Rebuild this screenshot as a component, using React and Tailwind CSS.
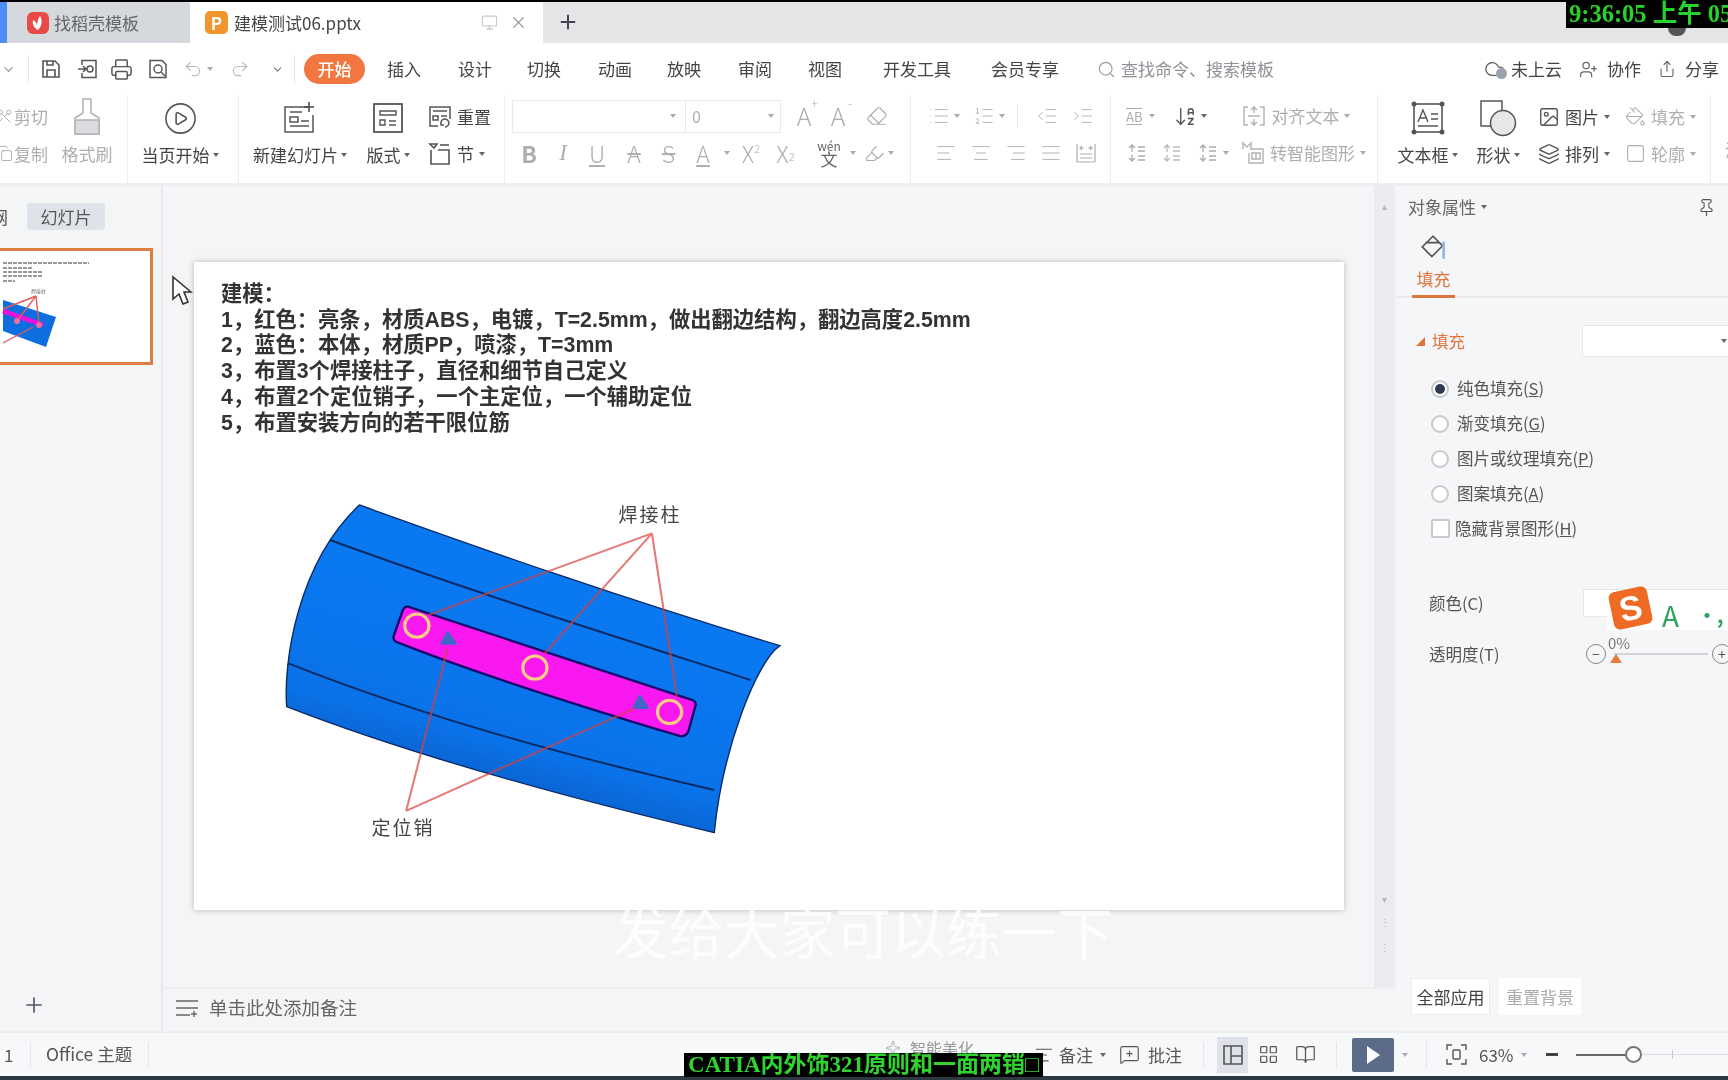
import React from "react";
import { X, Plus, Monitor, Undo2, Redo2, Search, Printer, ChevronDown, CirclePlay, Scissors, Copy, Pin, Image as ImageIcon, Layers, Square, AlignLeft, AlignCenter, AlignRight, AlignJustify, IndentDecrease, IndentIncrease, List, ListOrdered, Cloud, UserPlus, Share, Eraser, Highlighter, PaintBucket, LayoutGrid, BookOpen, MessageSquarePlus, ArrowDownAZ, Sparkle } from "lucide-react";

const Caret = ({ c = "border-t-[#666]" }) => (
  <span className={`inline-block shrink-0 w-0 h-0 border-x-[3px] border-x-transparent border-t-[4px] ${c}`} />
);
const GCaret = () => <Caret c="border-t-[#a8aaad]" />;

function FileDisk() {
  return (
    <svg width="22" height="22" viewBox="0 0 22 22" fill="none" stroke="#555" strokeWidth="1.6">
      <path d="M3 3h12l4 4v12H3z" /><path d="M7 19v-7h8v7M7 3v4h6V3" />
    </svg>
  );
}
function Export() {
  return (
    <svg width="22" height="22" viewBox="0 0 22 22" fill="none" stroke="#555" strokeWidth="1.5">
      <path d="M5 7V2.5h14v17H5V15" /><path d="M1 11h8m-3-3 3 3-3 3" /><circle cx="13" cy="11" r="3" />
    </svg>
  );
}
function Preview() {
  return (
    <svg width="22" height="22" viewBox="0 0 22 22" fill="none" stroke="#555" strokeWidth="1.5">
      <path d="M3 2.5h12l4 4v13H3z" /><circle cx="11" cy="11" r="4" /><path d="m14 14 4 4" />
    </svg>
  );
}
function NewSlide() {
  return (
    <svg width="36" height="34" viewBox="0 0 36 34" fill="none" stroke="#555" strokeWidth="1.5">
      <path d="M26 6H3v25h28V14" /><path d="M27 1v10M22 6h10" stroke="#444" /><path d="M8 11h12M8 16h8v5H8zM19 20h8M8 25h19" />
    </svg>
  );
}
function LayoutIc() {
  return (
    <svg width="32" height="32" viewBox="0 0 32 32" fill="none" stroke="#555" strokeWidth="1.8">
      <rect x="2" y="2" width="28" height="28" /><path d="M8 9h16v4H8zM8 18h5v5H8zM17 19h7M17 23h7" strokeWidth="1.4" />
    </svg>
  );
}
function ResetIc() {
  return (
    <svg width="24" height="24" viewBox="0 0 24 24" fill="none" stroke="#555" strokeWidth="1.5">
      <path d="M10 21H2V2h20v12" /><path d="M5 6h14M5 11h5v4H5zM13 11h6" />
      <path d="M13 19a4 4 0 1 1 4 3m-4-5v3h3" />
    </svg>
  );
}
function SectionIc() {
  return (
    <svg width="24" height="24" viewBox="0 0 24 24" fill="none" stroke="#555" strokeWidth="1.6">
      <path d="M3 8v14h18V8H10" /><path d="M2 2h7l-3 4z" /><path d="M12 3h9" />
    </svg>
  );
}
function Brush() {
  return (
    <svg width="28" height="38" viewBox="0 0 28 38" fill="none" stroke="#b0b2b5" strokeWidth="1.5">
      <path d="M10 1h8v14l8 5v16H2V20l8-5z" /><path d="M2 22h24v14H2z" fill="#d9dbdd" />
    </svg>
  );
}
function TextBoxIc() {
  return (
    <svg width="34" height="34" viewBox="0 0 34 34" fill="none" stroke="#555" strokeWidth="1.4">
      <rect x="3" y="3" width="28" height="28" strokeWidth="1.6" />
      <circle cx="3" cy="3" r="1.8" fill="#555" /><circle cx="31" cy="3" r="1.8" fill="#555" /><circle cx="3" cy="31" r="1.8" fill="#555" /><circle cx="31" cy="31" r="1.8" fill="#555" />
      <path d="m7 21 5-12 5 12M9 17h6M20 13h7M20 18h7M7 25h20" />
    </svg>
  );
}
function ShapeIc() {
  return (
    <svg width="38" height="38" viewBox="0 0 38 38" fill="none" stroke="#555" strokeWidth="1.5">
      <path d="M21 27H2V2h21v9" /><circle cx="24" cy="24" r="12.5" fill="#e6e7e9" />
    </svg>
  );
}
function SmartIc() {
  return (
    <svg width="24" height="24" viewBox="0 0 24 24" fill="none" stroke="#b0b2b5" strokeWidth="1.4">
      <path d="M2 8V2l4 4 4-4v6h12v14H8V12" /><path d="M11 12h8v6h-8zM15 12v6" />
    </svg>
  );
}
function AlignTextIc() {
  return (
    <svg width="24" height="24" viewBox="0 0 24 24" fill="none" stroke="#b0b2b5" strokeWidth="1.4">
      <path d="M6 3H2v18h4M18 3h4v18h-4M6 12h12M12 2v7m-3-3 3-3 3 3M12 22v-7m-3 3 3 3 3-3" />
    </svg>
  );
}
function LineIc({ up }) {
  return (
    <svg width="20" height="20" viewBox="0 0 20 20" fill="none" stroke="#a8aaad" strokeWidth="1.3">
      <path d="M5 2v7M2 5l3-3 3 3M5 18v-6M2 15l3 3 3-3M11 4h7M11 8h7M11 13h7M11 17h7" opacity={up ? 0.8 : 1} />
    </svg>
  );
}
function Distribute() {
  return (
    <svg width="22" height="22" viewBox="0 0 22 22" fill="none" stroke="#acaeb1" strokeWidth="1.2">
      <path d="M2 2v18M20 2v18M2 20h18M5 12h12M5 16h12M5 6h4m-2-2-2 2 2 2M17 6h-4m2-2 2 2-2 2" />
    </svg>
  );
}
function FitIc() {
  return (
    <svg width="21" height="21" viewBox="0 0 21 21" fill="none" stroke="#555" strokeWidth="1.4">
      <path d="M1 6V1h5M15 1h5v5M20 15v5h-5M6 20H1v-5" /><rect x="7" y="6" width="7" height="9" rx="1" />
    </svg>
  );
}
function TabLogo() {
  return (
    <span className="flex items-center justify-center w-[22px] h-[22px] rounded-[6px] bg-[#ea4a45]">
      <svg width="14" height="16" viewBox="0 0 14 16" fill="#fff"><path d="M7 15C3 13 1 9 2 5c2 1 4 3 4 6 0-4 1-7 3-10 2 3 3 9-2 14z" /></svg>
    </span>
  );
}

const C = ({ w, children, className = "" }) => (
  <div className={`flex items-center justify-center shrink-0 ${w} ${className}`}>{children}</div>
);
const GA = "text-[#acaeb1]";

function TabBar() {
  return (
    <div className="h-[43px] shrink-0 flex bg-[#e3e5e7] border-t-2 border-black text-[17px] text-[#555]">
      <div className="w-[7px] bg-[#4d8cf5]" />
      <div className="w-[183px] bg-[#d5d8dd] flex items-center pl-[20px] gap-[5px] text-[#666]">
        <TabLogo /><span>找稻壳模板</span>
      </div>
      <div className="w-[353px] bg-white flex items-center pl-[15px] relative">
        <span className="w-[23px] h-[23px] rounded-[5px] bg-[#f2952c] flex items-center justify-center text-white font-bold text-[17px] leading-none">P</span>
        <span className="ml-[6px] w-[127px] text-[#444] text-[17px] whitespace-nowrap">建模测试06.pptx</span>
        <Monitor size={17} className="ml-[120px] text-[#c4c6c9]" strokeWidth={1.5} />
        <X size={19} className="ml-[11px] text-[#9a9c9f]" strokeWidth={1.5} />
      </div>
      <div className="flex items-center ml-[14px] mt-[-2px]"><Plus size={22} className="text-[#445]" strokeWidth={2.2} /></div>
    </div>
  );
}

function MenuRow() {
  const tabs = [
    ["插入", "w-[78px]"], ["设计", "w-[64px]"], ["切换", "w-[74px]"], ["动画", "w-[68px]"], ["放映", "w-[70px]"], ["审阅", "w-[72px]"], ["视图", "w-[68px]"], ["开发工具", "w-[116px]"], ["会员专享", "w-[100px]"],
  ];
  return (
    <div className="h-[52px] shrink-0 bg-white flex items-center text-[17px] text-[#444]">
      <C w="w-[16px]"><ChevronDown size={15} className="text-[#999]" /></C>
      <div className="w-px h-[28px] bg-[#e4e5e7] ml-[12px]" />
      <C w="w-[30px]" className="ml-[7px]"><FileDisk /></C>
      <C w="w-[34px]" className="ml-[5px]"><Export /></C>
      <C w="w-[32px]"><Printer size={23} strokeWidth={1.5} className="text-[#555]" /></C>
      <C w="w-[42px]"><Preview /></C>
      <C w="w-[28px]"><Undo2 size={20} strokeWidth={1.4} className="text-[#b8babd]" /></C>
      <GCaret />
      <C w="w-[28px]" className="ml-[13px]"><Redo2 size={20} strokeWidth={1.4} className="text-[#b8babd]" /></C>
      <C w="w-[30px]" className="ml-[8px]"><ChevronDown size={13} className="text-[#777]" /></C>
      <div className="w-px h-[28px] bg-[#e4e5e7] ml-[2px]" />
      <div className="ml-[9px] w-[61px] h-[30px] rounded-full bg-[#f2763f] text-white flex items-center justify-center font-medium">开始</div>
      {tabs.map(([t, w]) => <C key={t} w={w}>{t}</C>)}
      <Search size={19} strokeWidth={1.5} className="text-[#9a9c9f] ml-[22px]" />
      <span className="ml-[5px] text-[#8f9196] w-[363px] whitespace-nowrap">查找命令、搜索模板</span>
      <span className="relative w-[26px] flex"><Cloud size={22} strokeWidth={1.5} className="text-[#666]" /><span className="absolute left-[12px] top-[10px] w-[11px] h-[11px] rounded-full bg-[#9aa3ad]" /></span>
      <span className="ml-[1px]">未上云</span>
      <UserPlus size={19} strokeWidth={1.5} className="ml-[17px] text-[#666]" />
      <span className="ml-[9px]">协作</span>
      <Share size={18} strokeWidth={1.5} className="ml-[17px] text-[#666]" />
      <span className="ml-[9px]">分享</span>
    </div>
  );
}

function Ribbon() {
  return (
    <div className="h-[91px] shrink-0 bg-white flex border-b-[3px] border-[#eceef0] text-[17px] text-[#444] overflow-hidden">
      {/* clipboard */}
      <div className={`w-[128px] flex shrink-0 border-r border-[#eceef0] ${GA}`}>
        <div className="w-[55px] pt-[3px]">
          <div className="h-[37px] flex items-center gap-[1px] ml-[-4px] whitespace-nowrap"><Scissors size={17} strokeWidth={1.4} className="rotate-90" /><span>剪切</span></div>
          <div className="h-[37px] flex items-center gap-[1px] ml-[-4px] whitespace-nowrap"><Copy size={17} strokeWidth={1.4} /><span>复制</span></div>
        </div>
        <div className="w-[64px] flex flex-col items-center pt-[4px]">
          <div className="h-[36px] flex items-center"><Brush /></div>
          <div className="h-[37px] flex items-center whitespace-nowrap">格式刷</div>
        </div>
      </div>
      {/* play */}
      <div className="w-[111px] shrink-0 flex flex-col items-center pt-[5px] pr-[6px] border-r border-[#eceef0]">
        <div className="h-[36px] flex items-center"><CirclePlay size={35} strokeWidth={1.1} className="text-[#555]" /></div>
        <div className="h-[37px] flex items-center gap-[3px] whitespace-nowrap">当页开始<Caret /></div>
      </div>
      {/* slides */}
      <div className="w-[266px] shrink-0 flex border-r border-[#eceef0] pt-[5px]">
        <div className="w-[112px] flex flex-col items-center ml-[5px]">
          <div className="h-[36px] flex items-center"><NewSlide /></div>
          <div className="h-[37px] flex items-center gap-[3px] whitespace-nowrap">新建幻灯片<Caret /></div>
        </div>
        <div className="w-[50px] flex flex-col items-center ml-[7px]">
          <div className="h-[36px] flex items-center"><LayoutIc /></div>
          <div className="h-[37px] flex items-center gap-[3px] whitespace-nowrap">版式<Caret /></div>
        </div>
        <div className="ml-[15px] mt-[-2px]">
          <div className="h-[37px] flex items-center gap-[5px] whitespace-nowrap"><ResetIc />重置</div>
          <div className="h-[37px] flex items-center gap-[5px] whitespace-nowrap"><SectionIc />节<Caret /></div>
        </div>
      </div>
      {/* font */}
      <div className={`w-[406px] shrink-0 border-r border-[#eceef0] pt-[4px] pl-[7px] ${GA}`}>
        <div className="h-[34px] flex items-center">
          <div className="w-[174px] h-[33px] border border-[#e8e9eb] flex items-center justify-end pr-[9px]"><GCaret /></div>
          <div className="w-[95px] h-[33px] border border-l-0 border-[#e8e9eb] flex items-center justify-between pl-[6px] pr-[6px] text-[16px]">0<GCaret /></div>
          <C w="w-[34px]" className="ml-[6px] text-[25px] font-light relative">A<span className="absolute right-[3px] top-[-3px] text-[12px]">+</span></C>
          <C w="w-[34px] relative text-[25px] font-light">A<span className="absolute right-[3px] top-[-3px] text-[12px]">-</span></C>
          <C w="w-[34px]" className="ml-[5px]"><Eraser size={22} strokeWidth={1.3} /></C>
        </div>
        <div className="h-[40px] flex items-center text-[23px]">
          <C w="w-[34px] font-semibold">B</C>
          <C w="w-[34px] italic font-light font-['Liberation_Serif',serif]">I</C>
          <C w="w-[34px] underline font-light">U</C>
          <C w="w-[34px] ml-[3px] font-light line-through">A</C>
          <C w="w-[35px] font-light line-through">S</C>
          <C w="w-[34px] font-light underline">A</C>
          <C w="w-[14px]"><GCaret /></C>
          <C w="w-[34px] font-light">X<sup className="text-[11px]">2</sup></C>
          <C w="w-[35px] font-light">X<sub className="text-[11px]">2</sub></C>
          <C w="w-[34px]" className="ml-[9px] flex-col leading-none text-[#666] text-[12px]"><span>wén</span><span className="text-[17px] mt-[-2px]">文</span></C>
          <C w="w-[14px]"><GCaret /></C>
          <C w="w-[28px]"><Highlighter size={21} strokeWidth={1.3} /></C>
          <GCaret />
        </div>
      </div>
      {/* paragraph */}
      <div className={`w-[200px] shrink-0 border-r border-[#eceef0] pt-[4px] ${GA}`}>
        <div className="h-[34px] flex items-center pl-[17px]">
          <List size={22} strokeWidth={1} /><span className="ml-[4px] flex"><GCaret /></span>
          <ListOrdered size={22} strokeWidth={1} className="ml-[13px]" /><span className="ml-[4px] flex"><GCaret /></span>
          <div className="w-px h-[24px] bg-[#e8e9eb] ml-[12px]" />
          <IndentDecrease size={22} strokeWidth={1} className="ml-[18px]" />
          <IndentIncrease size={22} strokeWidth={1} className="ml-[14px]" />
        </div>
        <div className="h-[40px] flex items-center pl-[24px] gap-[13px]">
          <AlignLeft size={22} strokeWidth={1} /><AlignCenter size={22} strokeWidth={1} /><AlignRight size={22} strokeWidth={1} /><AlignJustify size={22} strokeWidth={1} /><Distribute />
        </div>
      </div>
      {/* text */}
      <div className={`w-[267px] shrink-0 border-r border-[#eceef0] pt-[4px] ${GA}`}>
        <div className="h-[34px] flex items-center pl-[15px]">
          <span className="text-[13px] border-y border-[#a8aaad] leading-[15px]">AB</span><span className="ml-[7px] flex"><GCaret /></span>
          <ArrowDownAZ size={23} strokeWidth={1.5} className="ml-[19px] text-[#555]" /><span className="ml-[4px] flex"><Caret /></span>
          <span className="ml-[35px] flex"><AlignTextIc /></span>
          <span className="ml-[5px] whitespace-nowrap">对齐文本</span><span className="ml-[5px] flex"><GCaret /></span>
        </div>
        <div className="h-[40px] flex items-center pl-[16px]">
          <LineIc /><span className="ml-[15px] flex"><LineIc up /></span><span className="ml-[16px] flex"><LineIc /></span><span className="ml-[5px] flex"><GCaret /></span>
          <span className="ml-[12px] flex"><SmartIc /></span>
          <span className="ml-[5px] whitespace-nowrap">转智能图形</span><span className="ml-[5px] flex"><GCaret /></span>
        </div>
      </div>
      {/* insert */}
      <div className="w-[333px] shrink-0 border-r border-[#eceef0] flex pt-[5px]">
        <div className="w-[85px] ml-[7px] flex flex-col items-center">
          <div className="h-[36px] flex items-center"><TextBoxIc /></div>
          <div className="h-[37px] flex items-center gap-[3px] whitespace-nowrap">文本框<Caret /></div>
        </div>
        <div className="w-[54px] ml-[1px] flex flex-col items-center">
          <div className="h-[36px] flex items-center"><ShapeIc /></div>
          <div className="h-[37px] flex items-center gap-[3px] whitespace-nowrap">形状<Caret /></div>
        </div>
        <div className="ml-[13px] mt-[-2px]">
          <div className="h-[37px] flex items-center gap-[5px] whitespace-nowrap"><ImageIcon size={22} strokeWidth={1.5} className="text-[#555]" />图片<Caret /></div>
          <div className="h-[37px] flex items-center gap-[5px] whitespace-nowrap"><Layers size={22} strokeWidth={1.5} className="text-[#555]" />排列<Caret /></div>
        </div>
        <div className={`ml-[15px] mt-[-2px] ${GA}`}>
          <div className="h-[37px] flex items-center gap-[5px] whitespace-nowrap"><PaintBucket size={21} strokeWidth={1.2} />填充<GCaret /></div>
          <div className="h-[37px] flex items-center gap-[5px] whitespace-nowrap"><Square size={21} strokeWidth={1.2} />轮廓<GCaret /></div>
        </div>
      </div>
      <div className={`pl-[14px] pt-[42px] ${GA}`}>演</div>
    </div>
  );
}

function Thumb() {
  return (
    <div className="mt-[18px] ml-[-3px] w-[156px] h-[117px] bg-white border-[3px] border-[#dc7f43] overflow-hidden">
      <svg width="150" height="111" viewBox="-3 0 150 111">
        <path d="M0 12h86M0 17h30M0 21h40M0 25h40M0 30h12" stroke="#777" strokeWidth="1.4" strokeDasharray="4 1" />
        <path d="M0 49 53 66 43 96 0 80z" fill="#0d6ee0" />
        <path d="M0 60 40 74" stroke="#e414dc" strokeWidth="5" />
        <path d="M33 45 0 58M33 45 14 70M33 45 36 74M0 92 30 76" stroke="#e25a5a" strokeWidth="1.4" fill="none" />
        <circle cx="14" cy="70" r="3" fill="#f26aa0" /><circle cx="36" cy="74" r="3" fill="#f26aa0" />
        <text x="28" y="42" fontSize="5" fill="#666">焊接柱</text>
      </svg>
    </div>
  );
}

function LeftPanel() {
  return (
    <div className="w-[163px] shrink-0 border-r-2 border-[#e8e9ec] flex flex-col">
      <div className="flex items-center mt-[17px] h-[27px] text-[17px] text-[#555]">
        <span className="w-[27px] ml-[-9px]">网</span>
        <span className="ml-[9px] w-[78px] h-[27px] rounded-[4px] bg-[#dfe2e8] flex items-center justify-center">幻灯片</span>
      </div>
      <Thumb />
      <div className="mt-auto mb-[14px] ml-[22px]"><Plus size={24} strokeWidth={1.7} className="text-[#556]" /></div>
    </div>
  );
}

function Diagram() {
  return (
    <svg width="540" height="370" viewBox="0 0 540 370" className="ml-[38px] mt-[44px] block">
      <defs>
        <linearGradient id="bl" gradientUnits="userSpaceOnUse" x1="700" y1="400" x2="560" y2="900">
          <stop offset="0" stopColor="#0a78f0" /><stop offset="0.72" stopColor="#0a72e8" /><stop offset="1" stopColor="#0b60cc" />
        </linearGradient>
      </defs>
      <g transform="scale(0.3462 0.3333)">
        <path d="M290 75C600 190 1000 340 1505 497 1440 540 1340 800 1315 1058 1000 980 500 850 80 680 70 550 110 250 290 75Z" fill="url(#bl)" stroke="#0b2b66" strokeWidth="4" />
        <path d="M205 180C600 330 1000 460 1420 600M85 550C500 720 900 830 1315 930" fill="none" stroke="#0b2b66" strokeWidth="6" />
        <path d="M430 380 1250 660Q1265 665 1260 680L1240 755Q1230 772 1215 768C900 670 600 570 395 485Q385 478 390 465L415 392Q420 378 430 380Z" fill="#fa18f0" stroke="#1a0a70" strokeWidth="7" />
        <g fill="none" stroke="#ffcf85" strokeWidth="9">
          <circle cx="456" cy="437" r="35" /><circle cx="797" cy="563" r="35" /><circle cx="1186" cy="696" r="35" />
        </g>
        <path d="M545 455 525 492H570ZM1100 645 1080 685H1125Z" fill="#3f68c6" stroke="#3f68c6" strokeWidth="4" strokeLinejoin="round" />
        <path d="M1135 160 490 405M1135 160 825 520M1135 160 1207 650M425 993 545 505M425 993 1085 685" fill="none" stroke="#d8403c" strokeWidth="6" strokeOpacity="0.7" />
      </g>
      <text x="391" y="42" textAnchor="middle" fontSize="19" letterSpacing="2" fill="#444">焊接柱</text>
      <text x="144" y="355" textAnchor="middle" fontSize="19" letterSpacing="2" fill="#444">定位销</text>
    </svg>
  );
}

function Canvas() {
  const lines = ["建模：", "1，红色：亮条，材质ABS，电镀，T=2.5mm，做出翻边结构，翻边高度2.5mm", "2，蓝色：本体，材质PP，喷漆，T=3mm", "3，布置3个焊接柱子，直径和细节自己定义", "4，布置2个定位销子，一个主定位，一个辅助定位", "5，布置安装方向的若干限位筋"];
  return (
    <div className="flex-1 flex min-h-0">
      <div className="w-[1211px] pl-[31px] pt-[76px]">
        <div className="w-[1150px] h-[648px] bg-white shadow-[0_0_6px_rgba(0,0,0,0.25)] pl-[27px] pt-[20px] overflow-hidden">
          <div className="text-[21.3px] leading-[25.7px] font-semibold text-[#333] font-['Liberation_Sans','Noto_Sans_CJK_SC',sans-serif]">
            {lines.map((l) => <div key={l} className="whitespace-nowrap">{l}</div>)}
          </div>
          <Diagram />
        </div>
      </div>
      <div className="w-[21px] bg-[#ebecef] flex flex-col items-center text-[#b5b7ba] text-[10px] leading-none">
        <span className="mt-[15px]">▴</span>
        <span className="mt-[683px]">▾</span>
        <span className="mt-[13px]">⋮</span>
        <span className="mt-[15px]">⋮</span>
      </div>
    </div>
  );
}

function Radio({ on, children }) {
  return (
    <div className="h-[35px] flex items-center pl-[35px]">
      <span className="w-[18px] h-[18px] rounded-full border-2 border-[#c8cacd] bg-white flex items-center justify-center">
        {on && <span className="w-[10px] h-[10px] rounded-full bg-[#333a55]" />}
      </span>
      <span className="ml-[8px]">{children}</span>
    </div>
  );
}

function RightPanel() {
  const u = (s) => <span className="underline">{s}</span>;
  return (
    <div className="w-[332px] shrink-0 flex flex-col bg-[#f4f6f8] text-[16.5px] text-[#555] overflow-hidden">
      <div className="h-[42px] flex items-center justify-between pl-[12px] pr-[12px]">
        <span className="flex items-center gap-[5px] text-[#666] text-[17px]">对象属性<Caret /></span>
        <Pin size={19} strokeWidth={1.4} className="text-[#555]" />
      </div>
      <div className="h-[36px] flex items-center pl-[23px] pt-[4px]">
        <svg width="30" height="30" viewBox="0 0 28 28" fill="none" stroke="#555" strokeWidth="1.5">
          <path d="M13 3 3 13l9 9 10-10zM6 9h13" /><path d="M23 8v16" stroke="#8fb8e0" strokeWidth="2.5" />
        </svg>
      </div>
      <div className="h-[34px] border-b-2 border-[#e8eaec]">
        <div className="ml-[16px] w-[43px] h-[34px] border-b-[3px] border-[#e0743d] text-[#e0743d] text-center pt-[2px] text-[17px] leading-[26px]">填充</div>
      </div>
      <div className="mt-[27px] h-[32px] flex items-center pl-[20px] text-[#e0743d]">
        <span className="w-0 h-0 border-l-[9px] border-l-transparent border-b-[9px] border-b-[#e0743d]" />
        <span className="ml-[7px] whitespace-nowrap">填充</span>
        <div className="ml-[117px] w-[160px] h-[32px] shrink-0 bg-white border border-[#e6e8ea] rounded-[2px] flex items-center justify-end pr-[14px]"><Caret /></div>
      </div>
      <div className="mt-[14px]">
        <Radio on>纯色填充({u("S")})</Radio>
        <Radio>渐变填充({u("G")})</Radio>
        <Radio>图片或纹理填充({u("P")})</Radio>
        <Radio>图案填充({u("A")})</Radio>
        <div className="h-[35px] flex items-center pl-[35px]">
          <span className="w-[19px] h-[19px] rounded-[2px] border-2 border-[#c8cacd] bg-white" />
          <span className="ml-[5px]">隐藏背景图形({u("H")})</span>
        </div>
      </div>
      <div className="mt-[43px] h-[28px] flex items-center pl-[33px]">
        <span className="w-[58px] shrink-0 whitespace-nowrap">颜色(C)</span>
        <span className="ml-[96px] w-[160px] h-[28px] shrink-0 bg-white border border-[#e6e8ea]" />
      </div>
      <div className="mt-[22px] h-[30px] flex items-center pl-[33px]">
        <span className="w-[84px] shrink-0 whitespace-nowrap">透明度(T)</span>
        <span className="ml-[73px] w-[20px] h-[20px] rounded-full border border-[#888] flex items-center justify-center text-[14px] leading-none shrink-0">−</span>
        <span className="relative ml-[8px] w-[94px] h-[2px] bg-[#d2d4d7] shrink-0">
          <span className="absolute left-[-6px] top-[-21px] text-[15px] text-[#777]">0%</span>
          <span className="absolute left-[-4px] top-[1px] w-0 h-0 border-x-[6px] border-x-transparent border-b-[9px] border-b-[#ea7a3c]" />
        </span>
        <span className="ml-[4px] w-[20px] h-[20px] rounded-full border border-[#888] flex items-center justify-center text-[14px] leading-none shrink-0">+</span>
      </div>
      <div className="mt-auto mb-[16px] pl-[15px] flex gap-[9px] text-[17px]">
        <span className="w-[79px] h-[37px] bg-white border border-[#eaecee] flex items-center justify-center text-[#444]">全部应用</span>
        <span className="w-[82px] h-[37px] bg-white flex items-center justify-center text-[#aaacaf]">重置背景</span>
      </div>
    </div>
  );
}

function StatusBar() {
  return (
    <div className="h-[45px] shrink-0 bg-[#f7f8fa] border-t-2 border-[#eceef0] flex items-center text-[17px] text-[#555] whitespace-nowrap">
      <span className="ml-[4px] w-[26px] shrink-0">1</span>
      <div className="w-px h-[26px] bg-[#e6e7ea] shrink-0" />
      <span className="ml-[15px] w-[102px] shrink-0 text-[17.5px]">Office 主题</span>
      <div className="w-px h-[26px] bg-[#e6e7ea] shrink-0" />
      <Sparkle size={16} strokeWidth={1.2} className="ml-[736px] shrink-0 mt-[-14px] text-[#999]" />
      <span className="ml-[9px] text-[#999] text-[16px] w-[66px] shrink-0 mt-[-14px]">智能美化</span>
      <AlignLeft size={20} strokeWidth={1.3} className="ml-[58px] shrink-0" />
      <span className="ml-[5px] w-[34px] shrink-0">备注</span>
      <span className="ml-[7px] flex"><Caret /></span>
      <MessageSquarePlus size={21} strokeWidth={1.3} className="ml-[13px] shrink-0" />
      <span className="ml-[8px] w-[34px] shrink-0">批注</span>
      <div className="w-px h-[26px] bg-[#e6e7ea] ml-[21px] shrink-0" />
      <span className="ml-[13px] w-[31px] h-[36px] bg-[#dfe2e8] flex items-center justify-center shrink-0">
        <svg width="22" height="22" viewBox="0 0 22 22" fill="none" stroke="#555" strokeWidth="1.6"><path d="M2 2h18v18H2zM9 2v18M9 12h11" /></svg>
      </span>
      <LayoutGrid size={21} strokeWidth={1.4} className="ml-[10px] shrink-0" />
      <BookOpen size={21} strokeWidth={1.4} className="ml-[16px] shrink-0" />
      <div className="w-px h-[26px] bg-[#e6e7ea] ml-[20px] shrink-0" />
      <span className="ml-[15px] w-[42px] h-[34px] rounded-[2px] bg-[#5d6b8a] flex items-center justify-center shrink-0">
        <span className="w-0 h-0 border-y-[9px] border-y-transparent border-l-[13px] border-l-white" />
      </span>
      <span className="ml-[8px] flex"><GCaret /></span>
      <div className="w-px h-[26px] bg-[#e6e7ea] ml-[18px] shrink-0" />
      <span className="ml-[19px] flex"><FitIc /></span>
      <span className="ml-[12px] w-[35px] shrink-0">63%</span>
      <span className="ml-[7px] flex"><GCaret /></span>
      <span className="ml-[19px] w-[12px] h-[3px] bg-[#444] shrink-0" />
      <span className="ml-[18px] relative w-[160px] h-[1px] bg-[#dcdee1] shrink-0">
        <span className="absolute left-0 top-0 w-[50px] h-[2px] bg-[#666]" />
        <span className="absolute left-[49px] top-[-8px] w-[17px] h-[17px] rounded-full border-2 border-[#777] bg-white" />
        <span className="absolute left-[96px] top-[-4px] w-px h-[9px] bg-[#c8cacd]" />
      </span>
    </div>
  );
}

export default function App() {
  return (
    <div className="relative w-[1728px] h-[1080px] overflow-hidden flex flex-col bg-[#f4f5f7] blur-[0.6px] font-['Noto_Sans_CJK_SC','Noto_Sans',sans-serif]">
      <TabBar />
      <MenuRow />
      <Ribbon />
      <div className="flex-1 flex min-h-0">
        <LeftPanel />
        <div className="w-[1233px] shrink-0 flex flex-col">
          <Canvas />
          <div className="h-[44px] shrink-0 border-t-2 border-[#eceef0] flex items-center pl-[12px] pb-[5px] text-[18.5px] text-[#666] gap-[10px]">
            <svg width="24" height="20" viewBox="0 0 24 20" fill="none" stroke="#666" strokeWidth="1.4"><path d="M1 3h22M1 10h22M1 17h14M19 13v6M16 16h6" /></svg>
            单击此处添加备注
          </div>
        </div>
        <RightPanel />
      </div>
      <StatusBar />
      <div className="h-[4px] shrink-0 bg-[#2d3842]" />

      {/* overlays burned into the recording */}
      <svg width="22" height="32" viewBox="0 0 22 32" className="absolute left-[171px] top-[275px]" fill="#fff" stroke="#333" strokeWidth="1.6"><path d="M2 2v22l6-5 4 10 5-2-4-10h7z" /></svg>
      <div className="absolute left-[562px] top-[895px] w-[602px] text-center text-white/80 text-[55.5px] leading-[70px] whitespace-nowrap">发给大家可以练一下</div>
      <div className="absolute right-0 top-0 w-[162px] h-[28px] bg-black text-[#27d32a] text-[24.5px] leading-[28px] whitespace-nowrap overflow-hidden pl-[3px] font-['Liberation_Serif','Noto_Sans_CJK_SC',serif] font-bold">9:36:05 上午 05/</div>
      <div className="absolute left-[1668px] top-[28px] w-[18px] h-[8px] rounded-b-full bg-[#555]" />
      <div className="absolute left-[684px] top-[1053px] w-[359px] h-[24px] bg-black text-[#2fd42f] text-[23px] leading-[24px] whitespace-nowrap overflow-hidden text-center font-['Liberation_Serif','Noto_Sans_CJK_SC',serif] font-bold">CATIA内外饰321原则和一面两销□</div>
      <div className="absolute left-[1607px] top-[600px] w-[121px] h-[30px] bg-white flex items-center text-[#2ea25f] text-[28px]">
        <span className="absolute left-[4px] top-[-11px] w-[39px] h-[38px] rounded-[6px] bg-[#ef6a24] rotate-[-12deg] flex items-center justify-center text-white font-bold text-[34px] leading-none font-['Liberation_Sans',sans-serif]">S</span>
        <span className="ml-[55px]">A</span>
        <span className="ml-[18px] text-[20px] font-bold">•,</span>
      </div>
    </div>
  );
}
